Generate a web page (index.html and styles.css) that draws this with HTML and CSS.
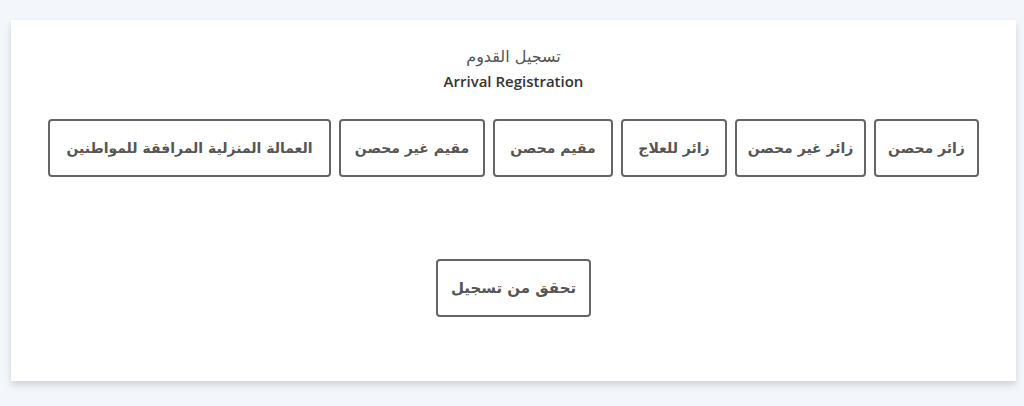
FILE: index.html
```html
<!DOCTYPE html>
<html lang="ar">
<head>
<meta charset="utf-8">
<link rel="stylesheet" href="styles.css">
</head>
<body>
<main class="card">
  <header class="heading">
    <div class="title-ar">تسجيل القدوم</div>
    <div class="title-en">Arrival Registration</div>
  </header>
  <div class="options" dir="rtl">
    <button class="opt w-105">زائر محصن</button>
    <button class="opt w-131">زائر غير محصن</button>
    <button class="opt w-106">زائر للعلاج</button>
    <button class="opt w-120">مقيم محصن</button>
    <button class="opt w-146">مقيم غير محصن</button>
    <button class="opt w-283">العمالة المنزلية المرافقة للمواطنين</button>
  </div>
  <div class="verify-row" dir="rtl">
    <button class="opt verify">تحقق من تسجيل</button>
  </div>
</main>
</body>
</html>
```

FILE: styles.css
```css
html, body {
  margin: 0;
  padding: 0;
}
body {
  background: #f3f6fb;
  padding: 20px 8px 25px 11px;
  font-family: "DejaVu Sans", "Noto Sans", sans-serif;
}
.card {
  width: 1005px;
  height: 361px;
  box-sizing: border-box;
  background: #fff;
  box-shadow: 0 4px 7px rgba(0, 0, 0, 0.14);
  padding-top: 26px;
  display: flex;
  flex-direction: column;
  align-items: center;
}
.heading {
  text-align: center;
}
.title-ar {
  font-size: 16px;
  line-height: 22px;
  color: #555;
}
.title-en {
  font-family: "Open Sans", "Liberation Sans", sans-serif;
  font-size: 15px;
  font-weight: 600;
  line-height: 22px;
  color: #333;
  margin-top: 2px;
}
.options {
  display: flex;
  gap: 8px;
  margin-top: 27px;
}
.opt {
  height: 58px;
  box-sizing: border-box;
  padding: 0;
  background: #fff;
  border: 2px solid #666;
  border-radius: 4px;
  color: #555;
  font-family: "DejaVu Sans", sans-serif;
  font-weight: bold;
  font-size: 14px;
  white-space: nowrap;
  text-align: center;
}
.w-105 { width: 105px; }
.w-106 { width: 106px; }
.w-120 { width: 120px; }
.w-131 { width: 131px; }
.w-146 { width: 146px; }
.w-283 { width: 283px; }
.verify-row {
  margin-top: 82px;
  display: flex;
}
.verify {
  width: 155px;
  font-size: 15px;
}
```
